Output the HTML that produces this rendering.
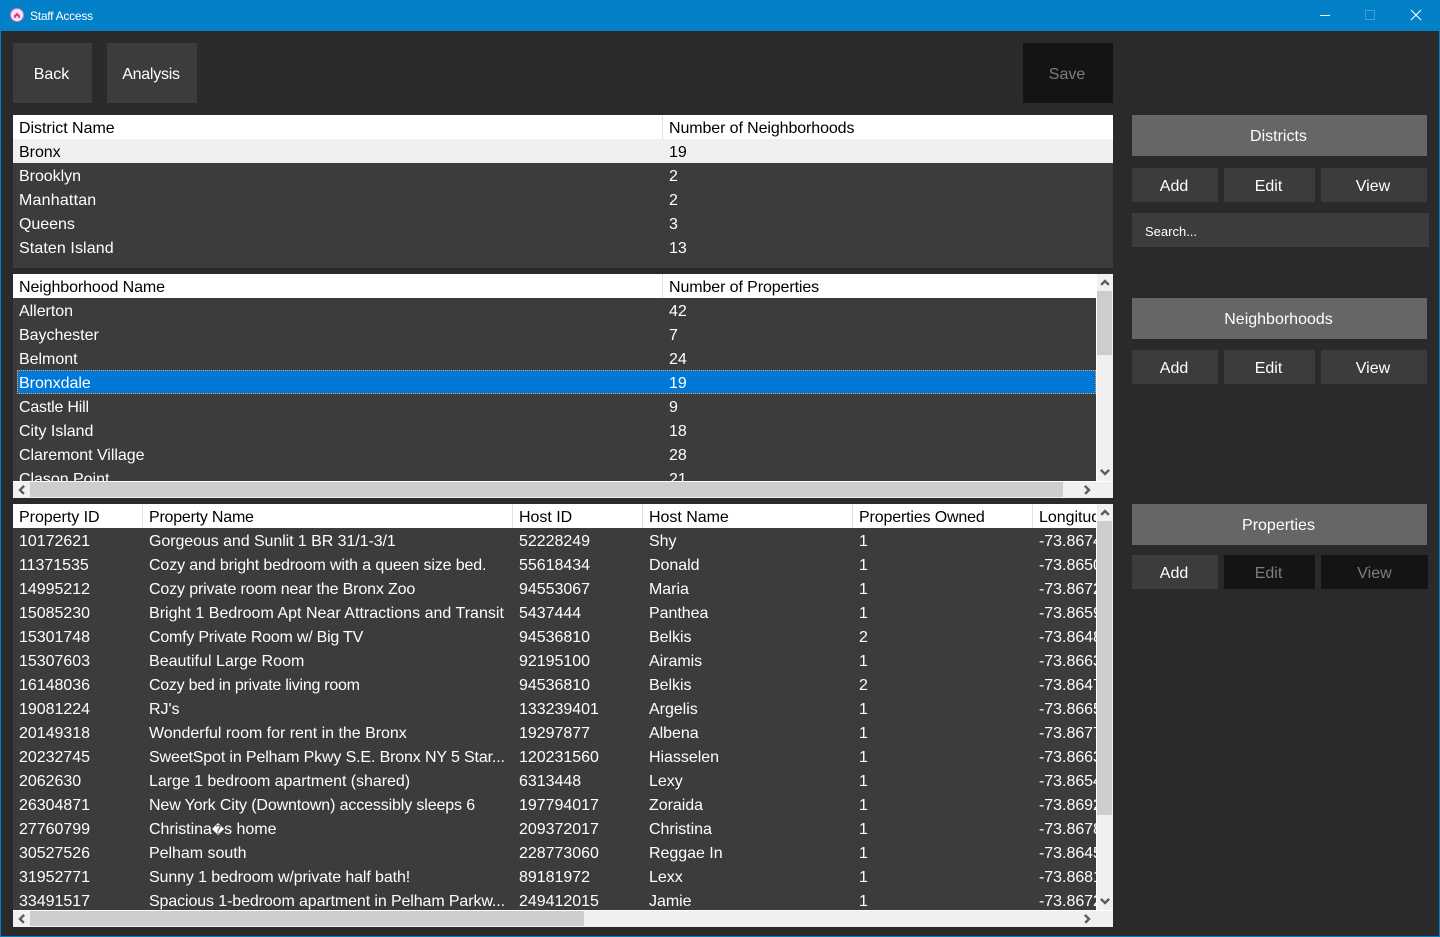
<!DOCTYPE html>
<html><head><meta charset="utf-8"><title>Staff Access</title>
<style>
html,body{margin:0;padding:0;width:1440px;height:937px;overflow:hidden;background:#2a2a2a}
body{position:relative;font-family:"Liberation Sans",sans-serif;font-size:16px;color:#fff}
div,span{position:absolute;box-sizing:border-box;white-space:nowrap}
.btn{background:#3c3c3c;display:flex;align-items:center;justify-content:center;color:#fff;padding:4px 2px 0 0}
.btn.d{background:#141414;color:#7d7d7d}
.btn.h{background:#666;padding-top:2px}
.t{background:#3c3c3c;overflow:hidden;left:13px;width:1100px}
.hd{left:0;top:0;height:24px;width:1100px;background:#fff;color:#000}
.sep{top:0;width:1px;height:24px;background:#e0e0e0}
.r{left:0;height:24px;width:1100px;line-height:24px}
.r span,.hd span{top:2px;line-height:24px;letter-spacing:-.03px}
.r i{font-style:normal;font-size:12px}
.th{background:#cdcdcd}
svg{position:absolute;overflow:visible}
svg path{shape-rendering:crispEdges}
</style></head><body>

<div style="left:0;top:0;width:1440px;height:31px;background:#0280c8"></div>
<div style="left:0;top:0;width:1px;height:937px;background:#0280c8"></div>
<div style="left:1439px;top:0;width:1px;height:937px;background:#0280c8"></div>
<div style="left:0;top:936px;width:1440px;height:1px;background:#0280c8"></div>
<svg style="left:10px;top:8px" width="14" height="14" viewBox="0 0 14 14"><circle cx="7" cy="7" r="6.5" fill="#f3e6f2" stroke="#c77bc0"/><path style="shape-rendering:auto" d="M4 7.500L7 4.500l3 3V10H8.200V8.300H5.800V10H4z" fill="#d33d9a"/></svg>
<div style="left:30px;top:9px;font-size:12px;line-height:15px;color:#fff;letter-spacing:-.25px">Staff Access</div>
<div style="left:1320px;top:15px;width:10px;height:1px;background:#fff"></div>
<div style="left:1365px;top:10px;width:10px;height:10px;border:1px solid #3f9fd8"></div>
<svg style="left:1411px;top:10px" width="10" height="10" viewBox="0 0 10 10"><path style="shape-rendering:auto" d="M0 0L10 10M10 0L0 10" stroke="#fff" stroke-width="1.100"/></svg>

<div class="btn" style="left:13px;top:43px;width:79px;height:60px">Back</div>
<div class="btn" style="left:107px;top:43px;width:90px;height:60px;letter-spacing:-.25px">Analysis</div>
<div class="btn d" style="left:1023px;top:43px;width:90px;height:60px">Save</div>

<div class="t" style="top:115px;height:153px">
<div class="hd"><span style="left:6px">District Name</span><div class="sep" style="left:649px"></div><span style="left:656px;letter-spacing:-.1px">Number of Neighborhoods</span></div>
<div class="r" style="top:24px;background:#f0f0f0;color:#000"><span style="left:6px">Bronx</span><span style="left:656px">19</span></div>
<div class="r" style="top:48px"><span style="left:6px">Brooklyn</span><span style="left:656px">2</span></div>
<div class="r" style="top:72px"><span style="left:6px;letter-spacing:.2px">Manhattan</span><span style="left:656px">2</span></div>
<div class="r" style="top:96px"><span style="left:6px">Queens</span><span style="left:656px">3</span></div>
<div class="r" style="top:120px"><span style="left:6px;letter-spacing:.1px">Staten Island</span><span style="left:656px">13</span></div>
</div>

<div class="t" style="top:274px;height:224px">
<div class="hd"><span style="left:6px;letter-spacing:-.1px">Neighborhood Name</span><div class="sep" style="left:649px"></div><span style="left:656px;letter-spacing:-.1px">Number of Properties</span></div>
<div class="r" style="top:24px"><span style="left:6px">Allerton</span><span style="left:656px">42</span></div>
<div class="r" style="top:48px"><span style="left:6px">Baychester</span><span style="left:656px">7</span></div>
<div class="r" style="top:72px"><span style="left:6px">Belmont</span><span style="left:656px">24</span></div>
<div style="left:4px;top:96px;width:1079px;height:24px;background:#0078d7;border:1px dotted #ff9a3c"></div>
<div class="r" style="top:96px"><span style="left:6px">Bronxdale</span><span style="left:656px">19</span></div>
<div class="r" style="top:120px"><span style="left:6px;letter-spacing:-.2px">Castle Hill</span><span style="left:656px">9</span></div>
<div class="r" style="top:144px"><span style="left:6px">City Island</span><span style="left:656px">18</span></div>
<div class="r" style="top:168px"><span style="left:6px">Claremont Village</span><span style="left:656px">28</span></div>
<div class="r" style="top:192px"><span style="left:6px">Clason Point</span><span style="left:656px">21</span></div>
<div style="left:1083px;top:0;width:17px;height:207px;background:#f0f0f0;border-left:1px solid #fff"></div>
<div class="th" style="left:1084px;top:17px;width:15px;height:64px"></div>
<div style="left:0;top:207px;width:1100px;height:17px;background:#f0f0f0;border-top:1px solid #fff"></div>
<div class="th" style="left:17px;top:208px;width:1033px;height:15px"></div>
<svg style="left:1087px;top:5px" width="10" height="7"><path d="M1 6L5 2L9 6" fill="none" stroke="#606060" stroke-width="2.400"/></svg>
<svg style="left:1087px;top:195px" width="10" height="7"><path d="M1 1L5 5L9 1" fill="none" stroke="#606060" stroke-width="2.400"/></svg>
<svg style="left:5px;top:211px" width="7" height="10"><path d="M6 1L2 5L6 9" fill="none" stroke="#606060" stroke-width="2.400"/></svg>
<svg style="left:1071px;top:211px" width="7" height="10"><path d="M1 1L5 5L1 9" fill="none" stroke="#606060" stroke-width="2.400"/></svg>
</div>

<div class="t" style="top:504px;height:423px">
<div class="hd"><span style="left:6px">Property ID</span><div class="sep" style="left:129px"></div><span style="left:136px;letter-spacing:-.22px">Property Name</span><div class="sep" style="left:499px"></div><span style="left:506px">Host ID</span><div class="sep" style="left:629px"></div><span style="left:636px">Host Name</span><div class="sep" style="left:839px"></div><span style="left:846px;letter-spacing:-.15px">Properties Owned</span><div class="sep" style="left:1019px"></div><span style="left:1026px">Longitude</span></div>
<div class="r" style="top:24px"><span style="left:6px">10172621</span><span style="left:136px;letter-spacing:-.07px">Gorgeous and Sunlit 1 BR 31/1-3/1</span><span style="left:506px">52228249</span><span style="left:636px">Shy</span><span style="left:846px">1</span><span style="left:1026px">-73.86744</span></div>
<div class="r" style="top:48px"><span style="left:6px">11371535</span><span style="left:136px;letter-spacing:-.13px">Cozy and bright bedroom with a queen size bed.</span><span style="left:506px">55618434</span><span style="left:636px">Donald</span><span style="left:846px">1</span><span style="left:1026px">-73.86501</span></div>
<div class="r" style="top:72px"><span style="left:6px">14995212</span><span style="left:136px;letter-spacing:-.14px">Cozy private room near the Bronx Zoo</span><span style="left:506px">94553067</span><span style="left:636px">Maria</span><span style="left:846px">1</span><span style="left:1026px">-73.86722</span></div>
<div class="r" style="top:96px"><span style="left:6px">15085230</span><span style="left:136px;letter-spacing:.02px">Bright 1 Bedroom Apt Near Attractions and Transit</span><span style="left:506px">5437444</span><span style="left:636px">Panthea</span><span style="left:846px">1</span><span style="left:1026px">-73.86591</span></div>
<div class="r" style="top:120px"><span style="left:6px">15301748</span><span style="left:136px;letter-spacing:-.22px">Comfy Private Room w/ Big TV</span><span style="left:506px">94536810</span><span style="left:636px">Belkis</span><span style="left:846px">2</span><span style="left:1026px">-73.86481</span></div>
<div class="r" style="top:144px"><span style="left:6px">15307603</span><span style="left:136px;letter-spacing:.03px">Beautiful Large Room</span><span style="left:506px">92195100</span><span style="left:636px">Airamis</span><span style="left:846px">1</span><span style="left:1026px">-73.86631</span></div>
<div class="r" style="top:168px"><span style="left:6px">16148036</span><span style="left:136px;letter-spacing:-.26px">Cozy bed in private living room</span><span style="left:506px">94536810</span><span style="left:636px">Belkis</span><span style="left:846px">2</span><span style="left:1026px">-73.86471</span></div>
<div class="r" style="top:192px"><span style="left:6px">19081224</span><span style="left:136px">RJ's</span><span style="left:506px">133239401</span><span style="left:636px">Argelis</span><span style="left:846px">1</span><span style="left:1026px">-73.86651</span></div>
<div class="r" style="top:216px"><span style="left:6px">20149318</span><span style="left:136px;letter-spacing:-.02px">Wonderful room for rent in the Bronx</span><span style="left:506px">19297877</span><span style="left:636px">Albena</span><span style="left:846px">1</span><span style="left:1026px">-73.86771</span></div>
<div class="r" style="top:240px"><span style="left:6px">20232745</span><span style="left:136px;letter-spacing:-.14px">SweetSpot in Pelham Pkwy S.E. Bronx NY 5 Star...</span><span style="left:506px">120231560</span><span style="left:636px">Hiasselen</span><span style="left:846px">1</span><span style="left:1026px">-73.86631</span></div>
<div class="r" style="top:264px"><span style="left:6px">2062630</span><span style="left:136px;letter-spacing:-.04px">Large 1 bedroom apartment (shared)</span><span style="left:506px">6313448</span><span style="left:636px">Lexy</span><span style="left:846px">1</span><span style="left:1026px">-73.86541</span></div>
<div class="r" style="top:288px"><span style="left:6px">26304871</span><span style="left:136px;letter-spacing:-.13px">New York City (Downtown) accessibly sleeps 6</span><span style="left:506px">197794017</span><span style="left:636px">Zoraida</span><span style="left:846px">1</span><span style="left:1026px">-73.86921</span></div>
<div class="r" style="top:312px"><span style="left:6px">27760799</span><span style="left:136px">Christina<i>�</i>s home</span><span style="left:506px">209372017</span><span style="left:636px">Christina</span><span style="left:846px">1</span><span style="left:1026px">-73.86781</span></div>
<div class="r" style="top:336px"><span style="left:6px">30527526</span><span style="left:136px">Pelham south</span><span style="left:506px">228773060</span><span style="left:636px">Reggae In</span><span style="left:846px">1</span><span style="left:1026px">-73.86451</span></div>
<div class="r" style="top:360px"><span style="left:6px">31952771</span><span style="left:136px;letter-spacing:-.11px">Sunny 1 bedroom w/private half bath!</span><span style="left:506px">89181972</span><span style="left:636px">Lexx</span><span style="left:846px">1</span><span style="left:1026px">-73.86811</span></div>
<div class="r" style="top:384px"><span style="left:6px">33491517</span><span style="left:136px;letter-spacing:-.11px">Spacious 1-bedroom apartment in Pelham Parkw...</span><span style="left:506px">249412015</span><span style="left:636px">Jamie</span><span style="left:846px">1</span><span style="left:1026px">-73.86721</span></div>
<div style="left:1083px;top:0;width:17px;height:406px;background:#f0f0f0;border-left:1px solid #fff"></div>
<div class="th" style="left:1084px;top:17px;width:15px;height:294px"></div>
<div style="left:0;top:406px;width:1100px;height:17px;background:#f0f0f0;border-top:1px solid #fff"></div>
<div class="th" style="left:17px;top:407px;width:554px;height:15px"></div>
<svg style="left:1087px;top:5px" width="10" height="7"><path d="M1 6L5 2L9 6" fill="none" stroke="#606060" stroke-width="2.400"/></svg>
<svg style="left:1087px;top:394px" width="10" height="7"><path d="M1 1L5 5L9 1" fill="none" stroke="#606060" stroke-width="2.400"/></svg>
<svg style="left:5px;top:410px" width="7" height="10"><path d="M6 1L2 5L6 9" fill="none" stroke="#606060" stroke-width="2.400"/></svg>
<svg style="left:1071px;top:410px" width="7" height="10"><path d="M1 1L5 5L1 9" fill="none" stroke="#606060" stroke-width="2.400"/></svg>
</div>

<div class="btn h" style="left:1132px;top:115px;width:295px;height:41px">Districts</div>
<div class="btn" style="left:1132px;top:168px;width:86px;height:34px">Add</div>
<div class="btn" style="left:1224px;top:168px;width:91px;height:34px">Edit</div>
<div class="btn" style="left:1321px;top:168px;width:106px;height:34px">View</div>
<div style="left:1132px;top:213px;width:297px;height:34px;background:#3c3c3c;font-size:13px;line-height:37px;padding-left:13px">Search...</div>

<div class="btn h" style="left:1132px;top:298px;width:295px;height:41px">Neighborhoods</div>
<div class="btn" style="left:1132px;top:350px;width:86px;height:34px">Add</div>
<div class="btn" style="left:1224px;top:350px;width:91px;height:34px">Edit</div>
<div class="btn" style="left:1321px;top:350px;width:106px;height:34px">View</div>

<div class="btn h" style="left:1132px;top:504px;width:295px;height:41px">Properties</div>
<div class="btn" style="left:1132px;top:555px;width:86px;height:34px">Add</div>
<div class="btn d" style="left:1224px;top:555px;width:91px;height:34px">Edit</div>
<div class="btn d" style="left:1321px;top:555px;width:107px;height:34px;padding-right:0">View</div>

</body></html>
